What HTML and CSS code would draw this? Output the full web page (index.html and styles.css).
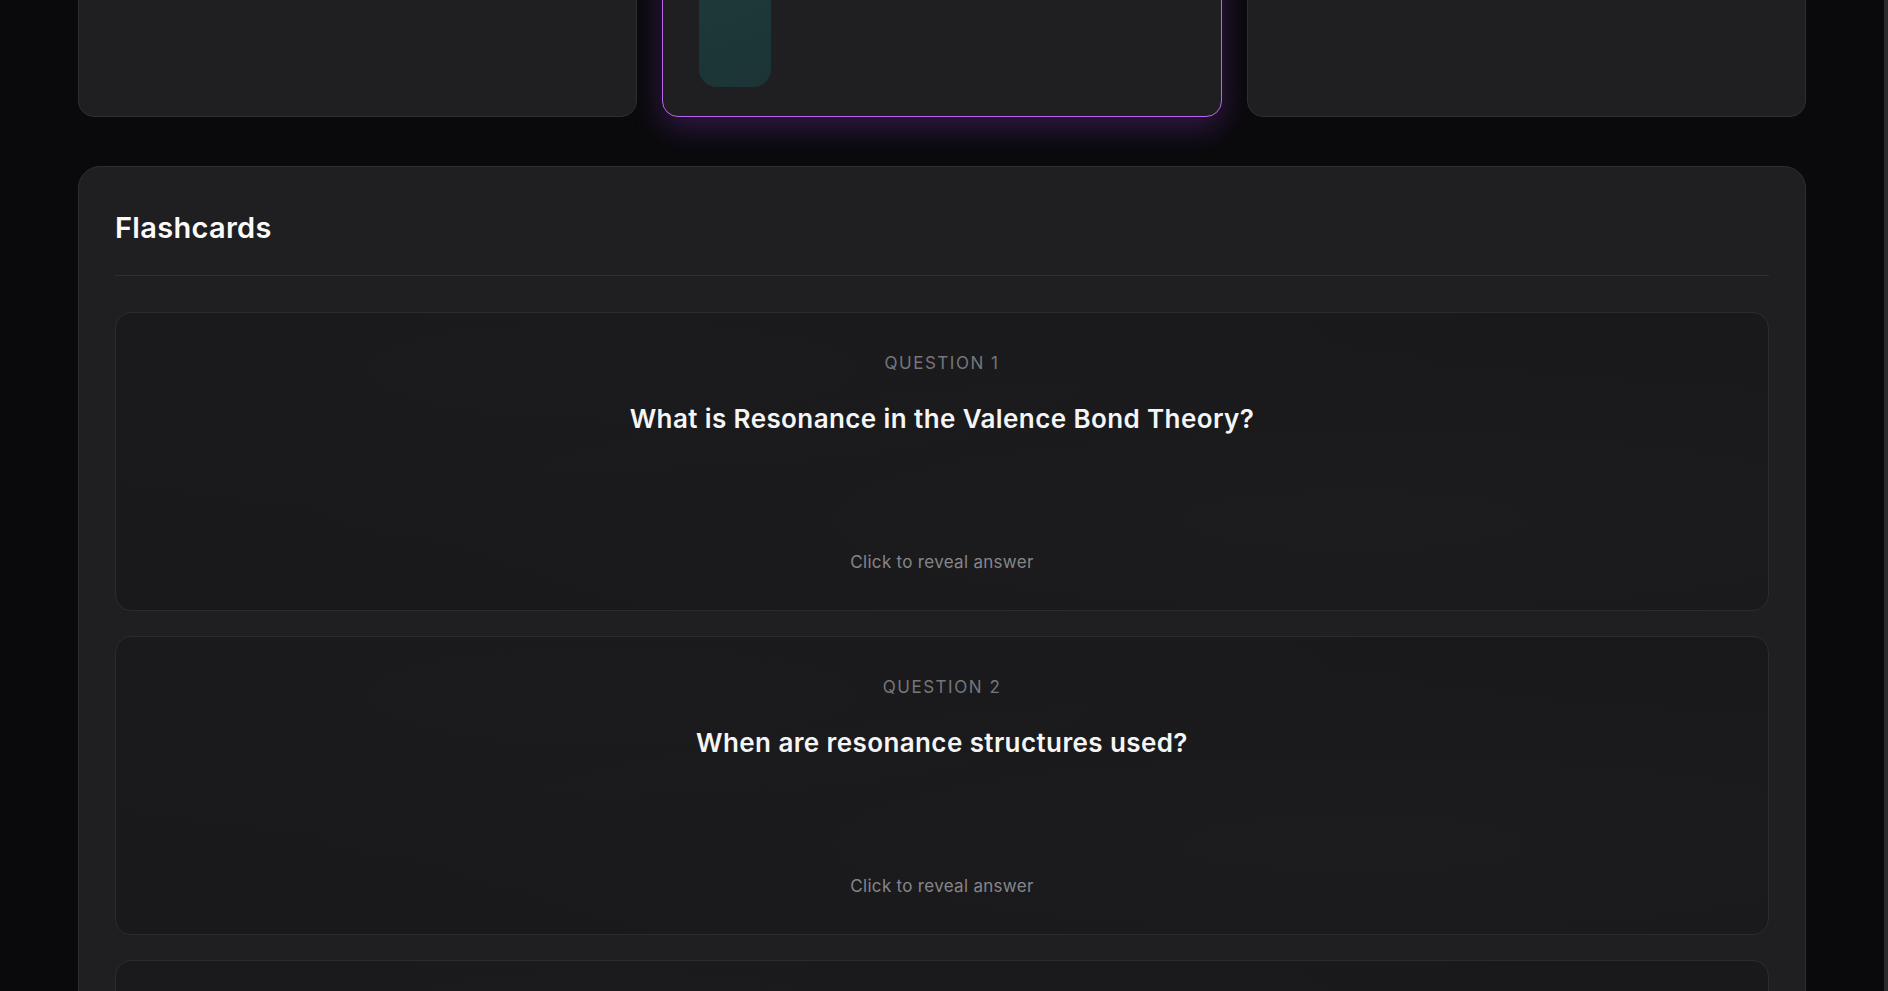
FILE: index.html
```html
<!DOCTYPE html>
<html>
<head>
    <meta charset="UTF-8">
    <title>Flashcards</title>
    <link rel="stylesheet" href="styles.css">
</head>
<body>
    <div class="page">
        <div class="stats">
            <div class="stat"></div>
            <div class="stat stat-active">
                <div class="bar"></div>
            </div>
            <div class="stat"></div>
        </div>

        <section class="panel">
            <h2 class="panel-title">Flashcards</h2>
            <div class="cards">
                <div class="card">
                    <div class="card-label">Question 1</div>
                    <div class="card-question">What is Resonance in the Valence Bond Theory?</div>
                    <div class="card-hint">Click to reveal answer</div>
                </div>
                <div class="card">
                    <div class="card-label">Question 2</div>
                    <div class="card-question">When are resonance structures used?</div>
                    <div class="card-hint">Click to reveal answer</div>
                </div>
                <div class="card"></div>
            </div>
        </section>
    </div>
</body>
</html>
```

FILE: styles.css
```css
*{padding:0;margin:0;box-sizing:border-box}
html{background:#0a0a0c;border-right:4px solid #2b2b2d}
body{background:#0a0a0c;color:#f4f4f5;font-family:Inter,"Noto Sans",sans-serif}

.page{padding:0 78px 40px;margin-top:-123px}

/* top row, scrolled half out of view */
.stats{display:grid;grid-template-columns:repeat(3,1fr);gap:25px}
.stat{height:240px;background:#1f1f21;border:1px solid #2e2e31;border-radius:16px}
.stat-active{border-color:#b965ee;box-shadow:0 10px 30px rgba(150,60,220,.3);display:flex;align-items:flex-end;padding:0 36px 29px}
.bar{width:72px;height:180px;border-radius:18px;background:linear-gradient(160deg,#1c3d3c,#1c3435)}

.panel{margin-top:49px;background:#1f1f21;border:1px solid #2e2e31;border-radius:22px;padding:36px}
.panel-title{font-size:29px;font-weight:600;line-height:34px;letter-spacing:.3px;padding:8px 0 30px;border-bottom:1px solid #2f2f32;color:#fafafa}

.cards{display:flex;flex-direction:column;gap:25px;margin-top:36px}
.card{min-height:299px;display:flex;flex-direction:column;align-items:center;text-align:center;padding:38px 40px 36px;border:1px solid #2c2c2f;border-radius:16px;background:radial-gradient(ellipse at 30% 20%,#1b1b1d,transparent 60%),radial-gradient(ellipse at 75% 70%,#1c1c1e,transparent 60%),#19191b}
.card-label{font-size:17px;line-height:24px;letter-spacing:.09em;text-transform:uppercase;color:#76767b}
.card-question{margin-top:27px;font-size:26px;font-weight:600;line-height:34px;color:#f5f5f5;letter-spacing:.4px}
.card-hint{margin-top:auto;font-size:17px;line-height:24px;letter-spacing:.3px;color:#86868b}
```
